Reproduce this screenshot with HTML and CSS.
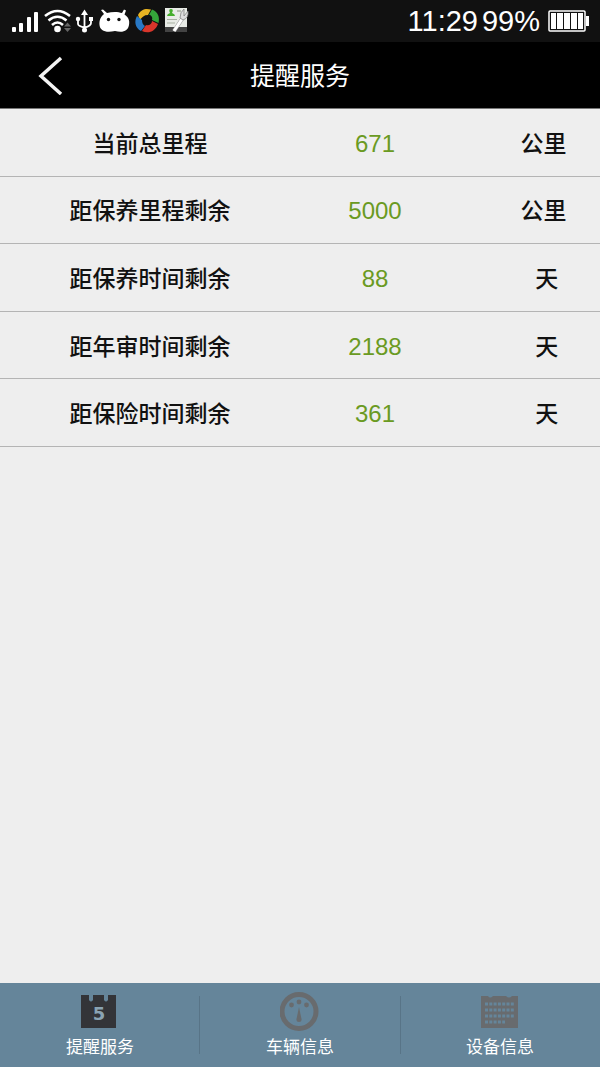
FILE: index.html
```html
<!DOCTYPE html>
<html lang="zh-CN">
<head>
<meta charset="utf-8">
<meta name="viewport" content="width=device-width, initial-scale=1">
<title>提醒服务</title>
<link rel="stylesheet" href="styles.css">
</head>
<body>
<div class="status-bar">
  <svg class="status-icons" width="182" height="42" viewBox="0 0 182 42" aria-hidden="true">
    <g fill="#fff">
      <rect x="2" y="27" width="4" height="5" rx="1"/>
      <rect x="9" y="23" width="4" height="9" rx="1"/>
      <rect x="17" y="17" width="4" height="15" rx="1"/>
      <rect x="24" y="12" width="4" height="20" rx="1"/>
      <circle cx="47.500" cy="29" r="3.300"/>
    </g>
    <g fill="none" stroke="#fff" stroke-width="2.600">
      <path d="M35 16Q47.500 6 60 16"/>
      <path d="M38.500 20.500Q47.500 13 56.500 20.500"/>
      <path d="M42 25Q47.500 20 53 25"/>
    </g>
    <path d="M54 26.500L57.500 22.500 61 26.500zM54 28L57.500 32 61 28z" fill="#666"/>
    <g fill="none" stroke="#fff" stroke-width="1.800">
      <path d="M74.500 14V30M68 20V24Q68 26 74.500 27.500Q81 26 81 23V19"/>
    </g>
    <g fill="#fff">
      <path d="M74.500 9.500L78 15H71z"/>
      <circle cx="74.500" cy="30" r="2.500"/>
      <circle cx="68" cy="19" r="2.200"/>
      <rect x="79" y="17" width="4" height="4"/>
      <path d="M94 14L91 10 93 9.500 97 13C102 11.500 108 11.500 112 13L114 9.500 116 10.500 114.500 14.500C118 17 120 20 119 25C118 31 113 33 105 31C96 33 90 31 89.500 25C89 20 91 16.500 94 14z"/>
    </g>
    <circle cx="98.500" cy="19.500" r="1.700" fill="#111"/>
    <circle cx="109" cy="19.500" r="1.700" fill="#111"/>
    <path d="M128 15C131 9 136 8 141 9.500L138 15C134 15 132 17 130 20z" fill="#e7b322"/>
    <path d="M142 9.500C148 12 150 17 148.500 23L142 20C143 17 141 15 139 15z" fill="#35a63a"/>
    <path d="M148 24C145 32 138 34 132 31L136 25C139 26 142 24 142 21z" fill="#d8362b"/>
    <path d="M131 31C125 28 124 21 127 16L132 20C132 23 133 25 135 26z" fill="#2878c5"/>
    <rect x="155" y="8" width="22" height="19" fill="#e8ebe6"/>
    <rect x="155" y="27" width="22" height="5" fill="#444"/>
    <path d="M157 16Q157 14 160 13Q158 9 161 9Q164 9 162 13Q165 14 165 16z" fill="#45ae2c"/>
    <path d="M167 11H171" stroke="#87907f" stroke-width="1"/>
    <path d="M157 19.500H167M157 23H165" stroke="#a7b0a1" stroke-width="1"/>
    <path d="M164 31L172 19" stroke="#999" stroke-width="4"/>
    <path d="M164 31L172 19" stroke="#fff" stroke-width="3"/>
    <path d="M174 9Q170 12 170 18L173 20Q179 18 178 11L174 16z" fill="#ddd" stroke="#777" stroke-width=".700"/>
  </svg>
  <div class="status-info">
    <span>11:29</span>
    <span>99%</span>
    <svg class="battery" width="41" height="22" viewBox="0 0 41 22" aria-hidden="true">
      <rect x="1" y="1" width="36" height="20" rx="1" fill="none" stroke="#fff" stroke-width="1.500"/>
      <path d="M38 6H41V16H38z" fill="#fff"/>
      <path d="M3 3H8V19H3zM9 3H15V19H9zM16 3H22V19H16zM23 3H29V19H23zM30 3H35V19H30z" fill="#fff"/>
    </svg>
  </div>
</div>
<header class="title-bar">
  <button class="back" type="button" aria-label="返回">
    <svg width="28" height="40" viewBox="0 0 28 40" aria-hidden="true"><path d="M24 3L4 21L24 39" fill="none" stroke="#f4f4f4" stroke-width="3.500"/></svg>
  </button>
  <h1 class="title">提醒服务</h1>
</header>
<main class="content">
  <table class="reminders">
    <tbody>
      <tr><th scope="row">当前总里程</th><td class="value">671</td><td class="unit">公里</td></tr>
      <tr><th scope="row">距保养里程剩余</th><td class="value">5000</td><td class="unit">公里</td></tr>
      <tr><th scope="row">距保养时间剩余</th><td class="value">88</td><td class="unit">&nbsp;天</td></tr>
      <tr><th scope="row">距年审时间剩余</th><td class="value">2188</td><td class="unit">&nbsp;天</td></tr>
      <tr><th scope="row">距保险时间剩余</th><td class="value">361</td><td class="unit">&nbsp;天</td></tr>
    </tbody>
  </table>
</main>
<nav class="tabs">
  <button class="tab" type="button" aria-current="page">
    <svg width="40" height="40" viewBox="0 0 40 40" aria-hidden="true">
      <path d="M1 4H9V9Q11 12 13 9V4H24V9Q26 12 28 9V4H36V37H1z" fill="#333438"/>
      <text class="day" x="19" y="29" text-anchor="middle">5</text>
    </svg>
    <span>提醒服务</span>
  </button>
  <button class="tab" type="button">
    <svg width="40" height="40" viewBox="0 0 40 40" aria-hidden="true">
      <circle cx="19" cy="20.500" r="17" fill="none" stroke="#686b6e" stroke-width="5"/>
      <g fill="#686b6e"><circle cx="11.500" cy="14" r="2.400"/><circle cx="19" cy="11" r="2.400"/><circle cx="26.500" cy="14" r="2.400"/><path d="M19 16L21.500 28Q22 31 19 31Q16 31 16.500 28z"/></g>
    </svg>
    <span>车辆信息</span>
  </button>
  <button class="tab" type="button">
    <svg width="40" height="40" viewBox="0 0 40 40" aria-hidden="true">
      <path d="M1 5H8Q10 8 13 5H26Q29 8 32 5H38V37H1z" fill="#686b6e"/>
      <path d="M5 13H34M5 19H34M5 25H34M5 31H25" stroke="#65859a" stroke-width="3" stroke-dasharray="3 1.300"/>
    </svg>
    <span>设备信息</span>
  </button>
</nav>
</body>
</html>
```
FILE: styles.css
```css
* {
  box-sizing: border-box;
}

body {
  margin: 0;
  min-height: 100vh;
  display: flex;
  flex-direction: column;
  background: #eee;
  color: #111;
  font-family: "Liberation Sans", "Noto Sans CJK SC", sans-serif;
}

button {
  border: 0;
  padding: 0;
  background: none;
  color: inherit;
  font: inherit;
}

svg {
  display: block;
}

.status-bar {
  display: flex;
  justify-content: space-between;
  align-items: center;
  height: 42px;
  padding: 0 11px 0 10px;
  background: #111;
  color: #fff;
}

.status-info {
  display: flex;
  align-items: center;
  gap: 4px;
  font-size: 29px;
  line-height: 42px;
}

.battery {
  margin-left: 4px;
}

.title-bar {
  display: grid;
  grid-template-columns: 100px 1fr 100px;
  align-items: center;
  height: 67px;
  border-bottom: 1px solid #777;
  background: #000;
  color: #fff;
}

.back {
  display: flex;
  align-items: center;
  height: 66px;
  padding-left: 37px;
}

.title {
  margin: 0;
  padding-top: 2px;
  text-align: center;
  font-size: 25px;
  font-weight: 400;
  line-height: 36px;
}

.content {
  flex: 1;
}

.reminders {
  width: 100%;
  height: 338px;
  table-layout: fixed;
  border-collapse: separate;
  border-spacing: 0;
  font-size: 23px;
  line-height: 34px;
  text-align: center;
}

.reminders th,
.reminders td {
  padding: 3px 0 0;
  border-bottom: 1px solid #b4b4b4;
  font-weight: 500;
}

.reminders th {
  width: 50%;
}

.reminders .value {
  color: #6a9a22;
  font-size: 24px;
  font-weight: 400;
}

.reminders .unit {
  padding-left: 37px;
}

.tabs {
  display: flex;
  align-items: center;
  height: 84px;
  padding-top: 2px;
  background: linear-gradient(#587487, #587487) 33.3% 50% / 1px 58px no-repeat,
    linear-gradient(#587487, #587487) 66.7% 50% / 1px 58px no-repeat, #65859a;
  color: #fff;
}

.tab {
  flex: 1;
  display: flex;
  flex-direction: column;
  align-items: center;
  gap: 4px;
  font-size: 17px;
  line-height: 26px;
}

.tab svg {
  margin-right: 1px;
}

.day {
  fill: #8aa3b3;
  font-family: "DejaVu Sans", sans-serif;
  font-size: 18px;
  font-weight: 700;
}
```
